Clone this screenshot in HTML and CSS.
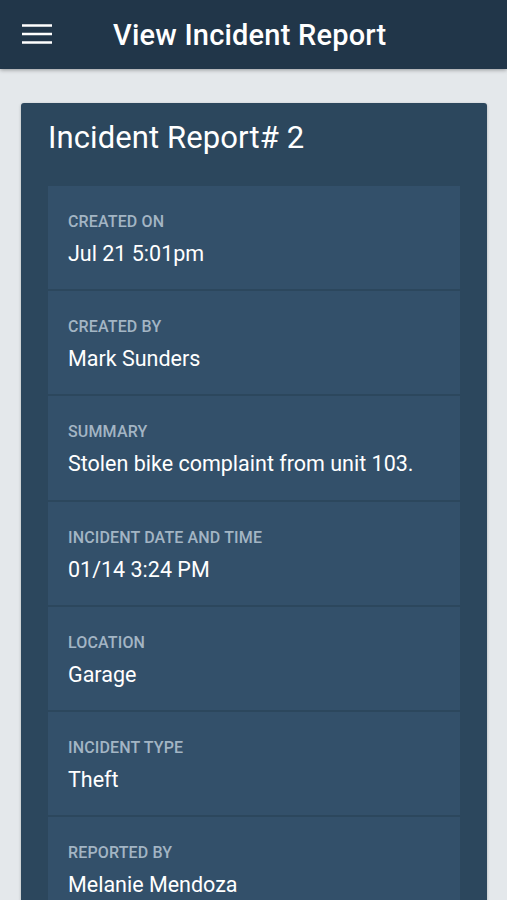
FILE: index.html
```html
<!DOCTYPE html>
<html lang="en">
<head>
<meta charset="utf-8">
<title>View Incident Report</title>
<link rel="stylesheet" href="styles.css">
</head>
<body>
<header class="appbar">
  <button class="menu-btn" aria-label="Menu">
    <svg width="30" height="21" viewBox="0 0 30 21"><path d="M0 1.5H30M0 10H30M0 18.5H30" stroke="#fff" stroke-width="2.6" fill="none"/></svg>
  </button>
  <h1 class="appbar-title">View Incident Report</h1>
</header>
<main class="content">
  <section class="card">
    <h2 class="card-title">Incident Report# 2</h2>
    <ul class="fields">
      <li class="field"><div class="label">Created On</div><div class="value">Jul 21 5:01pm</div></li>
      <li class="field"><div class="label">Created By</div><div class="value">Mark Sunders</div></li>
      <li class="field"><div class="label">Summary</div><div class="value">Stolen bike complaint from unit 103.</div></li>
      <li class="field"><div class="label">Incident Date and Time</div><div class="value">01/14 3:24 PM</div></li>
      <li class="field"><div class="label">Location</div><div class="value">Garage</div></li>
      <li class="field"><div class="label">Incident Type</div><div class="value">Theft</div></li>
      <li class="field"><div class="label">Reported By</div><div class="value">Melanie Mendoza</div></li>
    </ul>
  </section>
</main>
</body>
</html>
```
FILE: styles.css
```css
* { box-sizing: border-box; }
html, body { margin: 0; padding: 0; }
body {
  background: #e4e8eb;
  font-family: Roboto, "Noto Sans", Arial, sans-serif;
  height: 900px;
  overflow: hidden;
}
.appbar {
  position: relative;
  z-index: 2;
  height: 69px;
  background: #213649;
  display: flex;
  align-items: center;
  padding-left: 22px;
  box-shadow: 0 1px 4px rgba(0,0,0,0.35);
}
.menu-btn {
  background: none;
  border: 0;
  padding: 0;
  margin: 0;
  width: 30px;
  height: 21px;
  display: block;
}
.menu-btn svg { display: block; }
.appbar-title {
  margin: 0 0 0 61px;
  color: #fff;
  font-size: 29px;
  font-weight: 500;
  line-height: 32px;
  letter-spacing: 0.2px;
}
.content {
  padding: 34px 20px 0 21px;
}
.card {
  background: #2c475d;
  border-radius: 3px;
  padding: 17px 27px 0 27px;
  box-shadow: 0 1px 3px rgba(0,0,0,0.25);
  min-height: 900px;
}
.card-title {
  margin: 0 0 30px 0;
  color: #fff;
  font-size: 31px;
  font-weight: 400;
  line-height: 36px;
  letter-spacing: 0.1px;
}
.fields {
  list-style: none;
  margin: 0;
  padding: 0;
  display: flex;
  flex-direction: column;
  gap: 2px;
}
.field {
  background: #33506a;
  padding: 26px 20px 21.2px 20px;
}
.label {
  color: #a3b5c4;
  font-size: 16px;
  font-weight: 500;
  line-height: 20px;
  letter-spacing: 0.15px;
  text-transform: uppercase;
}
.value {
  margin-top: 8px;
  color: #fff;
  font-size: 21.5px;
  line-height: 28px;
}
```
